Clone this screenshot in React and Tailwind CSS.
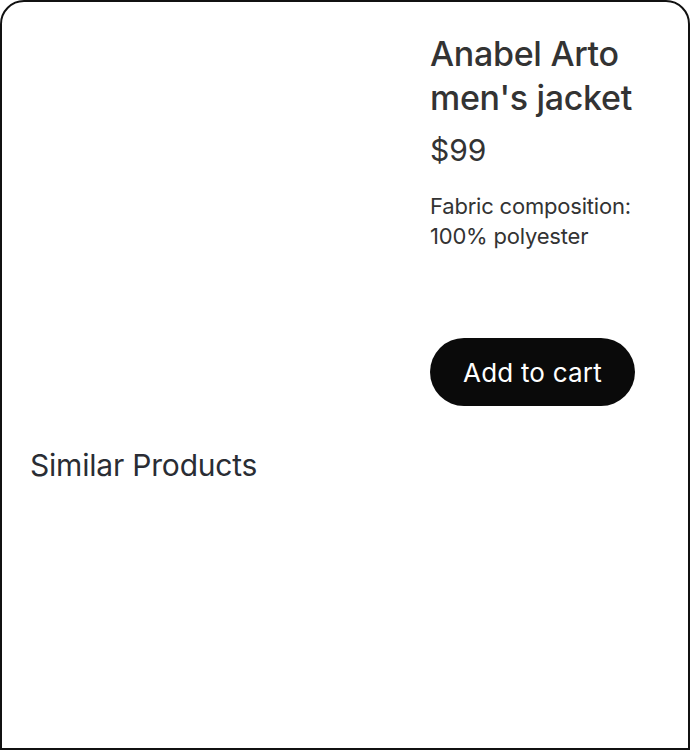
import React from 'react'

const App = () => {
    return (
        <div className="w-[690px] h-[750px] bg-white" style={{ fontFamily: 'Inter, "Noto Sans", sans-serif' }}>
            <div className="h-full border-2 border-[#111111] rounded-t-3xl p-[28px] pt-[30px] flex flex-col">
                <div className="grid grid-cols-[372px_230px] gap-[28px]">
                    {/* product image slot (blank) */}
                    <div></div>
                    <div className="flex flex-col">
                        <h1 className="text-[34px] leading-[44px] font-medium text-[#333333] tracking-[-0.3px]">
                            Anabel Arto men's jacket
                        </h1>
                        <p className="mt-[10px] text-[30px] leading-[40px] text-[#333333]">$99</p>
                        <p className="mt-[21px] text-[22px] leading-[30px] text-[#333333] tracking-[-0.2px]">
                            Fabric composition: 100% polyester
                        </p>
                        <div className="mt-[87px]">
                            <button
                                type="button"
                                className="bg-[#0a0a0a] text-white rounded-full h-[68px] px-[33px] text-[26px] font-normal tracking-[0.2px]"
                            >
                                Add to cart
                            </button>
                        </div>
                    </div>
                </div>
                <h2 className="mt-[39px] text-[30px] leading-[40px] text-[#2a2d34] tracking-[-0.2px]">Similar Products</h2>
            </div>
        </div>
    )
}

export default App
